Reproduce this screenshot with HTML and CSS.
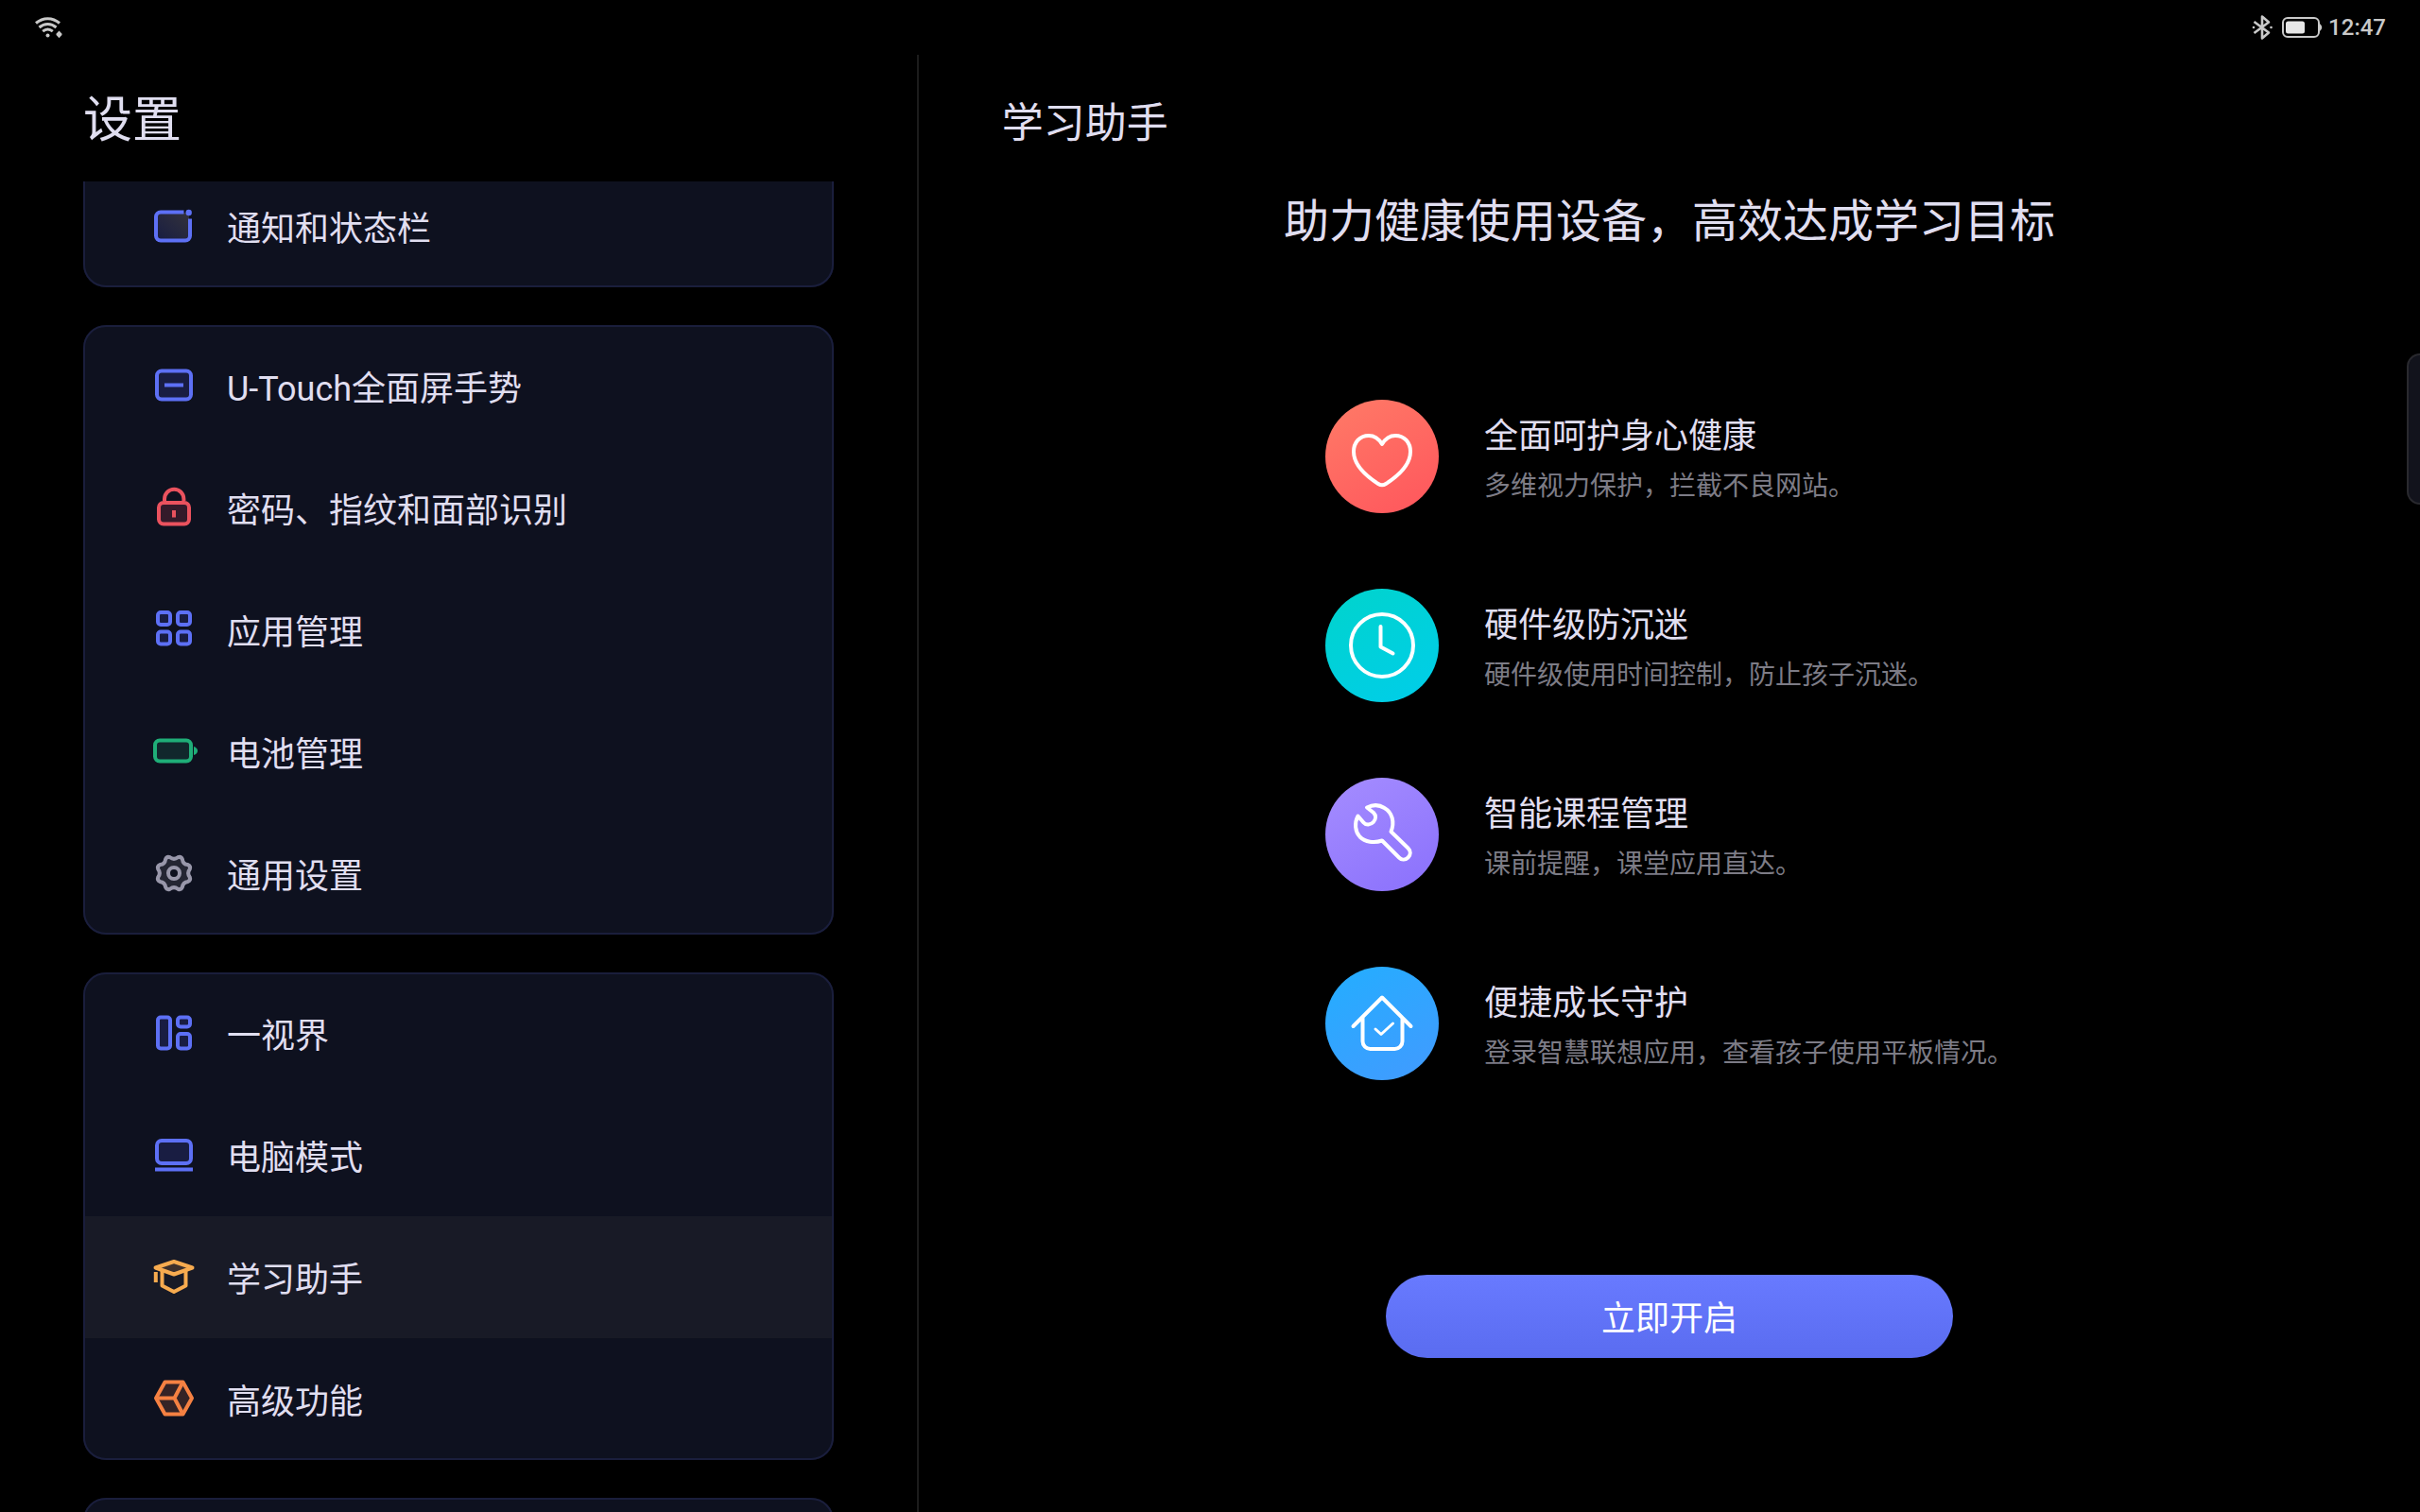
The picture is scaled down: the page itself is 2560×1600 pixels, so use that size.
FILE: index.html
```html
<!DOCTYPE html>
<html lang="zh-CN">
<head>
  <meta charset="UTF-8">
  <meta name="viewport" content="width=device-width, initial-scale=1.0">
  <title>设置</title>
  <link rel="stylesheet" href="styles.css">
</head>
<body>
  <header class="status-bar">
    <svg class="wifi" viewBox="0 0 32 24" width="32" height="24" fill="none" stroke="currentColor" stroke-width="3">
      <path d="M2 7.5C9.500 1 19.500 1 27 7.500M5.500 12C11 7.200 18 7.200 23.500 12M9.200 16.200C12.500 13.400 16.500 13.400 19.800 16.200" />
      <circle cx="14.500" cy="20.500" r="2" fill="currentColor" stroke="none" />
      <path d="M26.500 15.500L29.500 18.800V20L26.500 23.300 23.500 20V18.800Z" fill="currentColor" stroke="none" />
    </svg>
    <div class="status-right">
      <svg viewBox="0 0 24 28" width="24" height="28" fill="none" stroke="currentColor" stroke-width="2.600">
        <path d="M3.500 8L19 19.500 12 25.500V2.500L19 8.500 3.500 20" stroke-linejoin="round" />
        <circle cx="3" cy="14" r="1.300" fill="currentColor" stroke="none" />
        <circle cx="21.500" cy="14" r="1.300" fill="currentColor" stroke="none" />
      </svg>
      <svg viewBox="0 0 44 24" width="44" height="24">
        <rect x="2" y="2" width="38" height="20" rx="5" fill="none" stroke="currentColor" stroke-width="2" />
        <rect x="5" y="5.500" width="20" height="13" rx="2.500" fill="#e6e6e6" />
        <path d="M41 8Q45.500 12 41 16Z" fill="currentColor" />
      </svg>
      <time class="clock">12:47</time>
    </div>
  </header>

  <div class="panes">
    <aside class="sidebar">
      <h1 class="sidebar-title">设置</h1>
      <nav class="menu">
        <div class="card card-scrolled">
          <a class="item" href="#notifications">
            <svg class="icon blue" viewBox="0 0 48 48">
              <defs>
                <linearGradient id="noticeFill" x1="0" y1="1" x2="1" y2="0">
                  <stop offset="0" stop-color="#181d42" />
                  <stop offset="1" stop-color="#33323b" />
                </linearGradient>
              </defs>
              <rect x="6" y="10" width="34" height="29" rx="4" fill="url(#noticeFill)" stroke="none" />
              <path d="M34.500 9.500H10a5 5 0 0 0-5 5V34.500a5 5 0 0 0 5 5H36a5 5 0 0 0 5-5V16.500" fill="none" />
              <circle cx="39.700" cy="10" r="3.200" fill="#5d70f5" stroke="none" />
            </svg>
            通知和状态栏
          </a>
        </div>

        <div class="card">
          <a class="item" href="#gestures">
            <svg class="icon blue" viewBox="0 0 48 48">
              <rect x="6" y="8.500" width="36" height="30" rx="5" />
              <path d="M14 23.500H34" />
            </svg>
            <span><span class="latin">U-Touch</span>全面屏手势</span>
          </a>
          <a class="item" href="#security">
            <svg class="icon red" viewBox="0 0 48 48">
              <path d="M14 17V15a10.200 10.200 0 0 1 20.400 0V17" fill="none" />
              <rect x="8" y="19" width="32" height="22.500" rx="5" />
              <path d="M24 27V34.500" />
            </svg>
            密码、指纹和面部识别
          </a>
          <a class="item" href="#apps">
            <svg class="icon blue" viewBox="0 0 48 48">
              <rect x="7" y="6" width="13" height="13" rx="3" />
              <rect x="28" y="6" width="13" height="13" rx="3" />
              <rect x="7" y="26.500" width="13" height="13" rx="3" />
              <rect x="28" y="26.500" width="13" height="13" rx="3" />
            </svg>
            应用管理
          </a>
          <a class="item" href="#battery">
            <svg class="icon green" viewBox="0 0 48 48">
              <rect x="4" y="12.500" width="38" height="22" rx="5" />
              <path d="M45 19Q49 20.500 49 23.500T45 28Z" fill="#1fae78" stroke="none" />
            </svg>
            电池管理
          </a>
          <a class="item" href="#general">
            <svg class="icon grey" viewBox="0 0 48 48">
              <path d="M28.200 7.200Q31.500 6 32.900 9.200Q33.500 14.500 38.800 15.100Q42 16.500 40.800 19.800Q37.500 24 40.800 28.200Q42 31.500 38.800 32.900Q33.500 33.500 32.900 38.800Q31.500 42 28.200 40.800Q24 37.500 19.800 40.800Q16.500 42 15.100 38.800Q14.500 33.500 9.200 32.900Q6 31.500 7.200 28.200Q10.500 24 7.200 19.800Q6 16.500 9.200 15.100Q14.500 14.500 15.100 9.200Q16.500 6 19.800 7.200Q24 10.500 28.200 7.200Z" />
              <circle cx="24" cy="24" r="6" fill="#0e111f" />
            </svg>
            通用设置
          </a>
        </div>

        <div class="card">
          <a class="item" href="#onevision">
            <svg class="icon blue" viewBox="0 0 48 48">
              <rect x="7" y="7.500" width="13" height="33" rx="3" />
              <rect x="28" y="7.500" width="13" height="10" rx="3" />
              <rect x="28" y="25" width="13" height="15.500" rx="3" />
            </svg>
            一视界
          </a>
          <a class="item" href="#pc-mode">
            <svg class="icon blue" viewBox="0 0 48 48">
              <rect x="6" y="9" width="36" height="24" rx="5" />
              <path d="M4 39.500H44" />
            </svg>
            电脑模式
          </a>
          <a class="item active" href="#study" aria-current="page">
            <svg class="icon amber" viewBox="0 0 48 48">
              <path d="M11.500 18V33.500L24 40 36.500 33.500V18" fill="none" />
              <path d="M24 8L43.500 14.500 24 21.500 4.500 14.500Z" />
              <path d="M4.800 19V30" />
            </svg>
            学习助手
          </a>
          <a class="item" href="#advanced">
            <svg class="icon orange" viewBox="0 0 48 48">
              <path d="M5 23.500L14.500 6.500H33.500L43 23.500 33.500 40.500H14.500Z" />
              <path d="M5 23.500H24.500L33.500 6.500M24.500 23.500L33.500 40.500" fill="none" />
            </svg>
            高级功能
          </a>
        </div>

        <div class="card card-next"></div>
      </nav>
    </aside>

    <main class="detail">
      <h2 class="detail-title">学习助手</h2>
      <p class="headline">助力健康使用设备，高效达成学习目标</p>

      <ul class="features">
        <li class="feature">
          <svg class="badge heart" viewBox="0 0 120 120">
            <path d="M60 47C56 40.500 51 38 46 38C36 38 30 45.500 30 55C30 69 42 80 56 89Q60 91.500 64 89C78 80 90 69 90 55C90 45.500 84 38 74 38C69 38 64 40.500 60 47Z" />
          </svg>
          <div>
            <h3>全面呵护身心健康</h3>
            <p>多维视力保护，拦截不良网站。</p>
          </div>
        </li>
        <li class="feature">
          <svg class="badge time" viewBox="0 0 120 120">
            <circle cx="60" cy="60" r="33" />
            <path d="M58.500 40V61.500L71.500 68.500" />
          </svg>
          <div>
            <h3>硬件级防沉迷</h3>
            <p>硬件级使用时间控制，防止孩子沉迷。</p>
          </div>
        </li>
        <li class="feature">
          <svg class="badge course" viewBox="0 0 120 120">
            <path d="M44 31.500C50 28.500 57 28.500 62.500 32C71 37 73.500 47 69.500 57L87.500 74.500C90.500 77.500 90.500 81.500 87.500 84.500C84.500 87.300 80.500 87 78 84.500L60 66.500C51.500 69.500 42 68 36.500 62.500C31.500 57 30.500 48 34.500 40.500L40.500 47.500C43 50.500 48 50 50.800 47C53.500 44 54 40 51 37Z" />
          </svg>
          <div>
            <h3>智能课程管理</h3>
            <p>课前提醒，课堂应用直达。</p>
          </div>
        </li>
        <li class="feature">
          <svg class="badge home" viewBox="0 0 120 120">
            <path d="M29.500 63L60 32.500 90.500 63M39.500 54V79a8 8 0 0 0 8 8H73.500a8 8 0 0 0 8-8V54" />
            <path class="tick" d="M53 66L59 71.500 71.500 60" />
          </svg>
          <div>
            <h3>便捷成长守护</h3>
            <p>登录智慧联想应用，查看孩子使用平板情况。</p>
          </div>
        </li>
      </ul>

      <button class="start" type="button">立即开启</button>
    </main>
  </div>

  <div class="edge-handle"></div>
</body>
</html>
```
FILE: styles.css
```css
* { box-sizing: border-box; }
body {
  display: flex;
  flex-direction: column;
  height: 100vh;
  margin: 0;
  overflow: hidden;
  background: #000;
  color: #e0def0;
  font-family: "Noto Sans CJK SC", "Noto Sans", sans-serif;
  font-size: 36px;
}
h1, h2, h3, p, ul { margin: 0; padding: 0; font-weight: 400; }
ul { list-style: none; }

/* status bar */
.status-bar {
  display: flex;
  flex-shrink: 0;
  justify-content: space-between;
  align-items: center;
  height: 58px;
  padding: 0 36px;
  color: #c9c9c9;
}
.status-right { display: flex; align-items: center; gap: 8px; }
.clock { font: 500 24px/28px Roboto, sans-serif; margin-left: -2px; }

/* panes */
.panes { display: flex; flex: 1; min-height: 0; }
.sidebar {
  display: flex;
  flex-direction: column;
  width: calc(38% - 1px);
  padding: 0 88px;
  border-right: 2px solid #1c1c1c;
}
.sidebar-title { flex-shrink: 0; padding-bottom: 4px; font-size: 52px; line-height: 130px; }
.menu {
  display: flex;
  flex: 1;
  flex-direction: column;
  gap: 40px;
  min-height: 0;
  overflow: hidden;
}
.card {
  flex-shrink: 0;
  overflow: hidden;
  background: #0e111f;
  border-radius: 24px;
  outline: 2px solid #1a1e3c;
  outline-offset: -2px;
}
.card-scrolled { margin-top: -48px; padding-top: 31px; }
.card-next { height: 129px; }
.item {
  display: flex;
  align-items: center;
  gap: 32px;
  height: 129px;
  padding: 0 72px 2px;
  color: inherit;
  text-decoration: none;
}
.item.active { background: #181a26; }
.latin { font-family: Roboto, sans-serif; line-height: 1; }

.icon { width: 48px; height: 48px; overflow: visible; stroke-width: 4; stroke-linejoin: round; }
.blue { stroke: #5d70f5; fill: #191d42; }
.red { stroke: #ea525e; fill: #341a2a; }
.green { stroke: #1fae78; fill: #11272c; }
.grey { stroke: #9897aa; fill: #242633; }
.amber { stroke: #f7ab4f; fill: #3d302c; }
.orange { stroke: #f58142; fill: #342326; }

/* detail */
.detail {
  display: flex;
  flex: 1;
  flex-direction: column;
  align-items: center;
  padding: 0 88px 163px;
}
.detail-title { align-self: flex-start; font-size: 44px; line-height: 138px; }
.headline { font-size: 48px; line-height: 68px; }
.features { display: grid; gap: 80px; margin-top: 159px; }
.feature { display: flex; align-items: center; gap: 48px; }
.feature h3 { padding-top: 4px; font-size: 36px; line-height: 54px; }
.feature p { color: #7d7c86; font-size: 28px; line-height: 54px; }
.badge {
  width: 120px;
  height: 120px;
  border-radius: 50%;
  fill: none;
  stroke: #fff;
  stroke-width: 4;
  stroke-linecap: round;
  stroke-linejoin: round;
}
.tick { stroke-width: 3; }
.heart { background: linear-gradient(150deg, #ff7b67, #ff555c); }
.time { background: linear-gradient(150deg, #00d4cc, #00cdea); }
.course { background: linear-gradient(150deg, #a58dff, #8a70fc); }
.home { background: linear-gradient(150deg, #23aeff, #429aff); }
.start {
  width: 600px;
  height: 88px;
  margin-top: auto;
  padding: 0 0 2px;
  border: none;
  border-radius: 44px;
  background: linear-gradient(#687aff, #5a6cf0);
  color: #fff;
  font: inherit;
  cursor: pointer;
}

/* floating panel handle on the screen edge */
.edge-handle {
  position: absolute;
  top: 374px;
  right: 0;
  width: 14px;
  height: 160px;
  border: 2px solid #29292e;
  border-right: none;
  border-radius: 14px 0 0 14px;
  background: #12131c;
}
```
